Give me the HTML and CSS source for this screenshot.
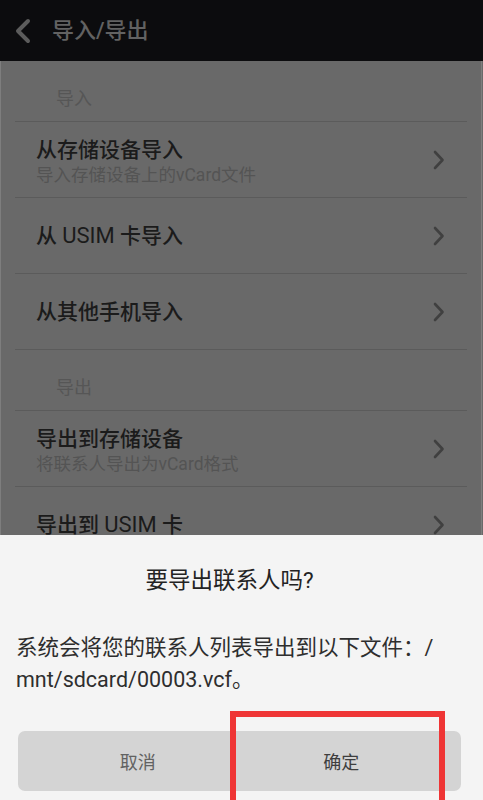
FILE: index.html
```html
<!DOCTYPE html>
<html lang="zh-CN">
<head>
<meta charset="utf-8">
<title>导入/导出</title>
<link rel="stylesheet" href="styles.css">
</head>
<body>
<div class="screen">
  <header class="appbar">
    <svg class="back" width="18" height="26" viewBox="0 0 18 26"><path d="M14 3 L4 13 L14 23" fill="none" stroke="#5c5c5c" stroke-width="4" stroke-linecap="round" stroke-linejoin="round"/></svg>
    <span class="appbar-title">导入/导出</span>
  </header>
  <main class="list">
    <div class="section-head">导入</div>
    <div class="row two">
      <div class="row-text">
        <div class="row-title">从存储设备导入</div>
        <div class="row-sub">导入存储设备上的vCard文件</div>
      </div>
      <svg class="chev" width="12" height="20" viewBox="0 0 12 20"><path d="M2 2 L9.5 10 L2 18" fill="none" stroke="#404040" stroke-width="2.6" stroke-linecap="round" stroke-linejoin="round"/></svg>
    </div>
    <div class="row">
      <div class="row-text"><div class="row-title">从 <span class="latin">USIM</span> 卡导入</div></div>
      <svg class="chev" width="12" height="20" viewBox="0 0 12 20"><path d="M2 2 L9.5 10 L2 18" fill="none" stroke="#404040" stroke-width="2.6" stroke-linecap="round" stroke-linejoin="round"/></svg>
    </div>
    <div class="row">
      <div class="row-text"><div class="row-title">从其他手机导入</div></div>
      <svg class="chev" width="12" height="20" viewBox="0 0 12 20"><path d="M2 2 L9.5 10 L2 18" fill="none" stroke="#404040" stroke-width="2.6" stroke-linecap="round" stroke-linejoin="round"/></svg>
    </div>
    <div class="section-head">导出</div>
    <div class="row two">
      <div class="row-text">
        <div class="row-title">导出到存储设备</div>
        <div class="row-sub">将联系人导出为vCard格式</div>
      </div>
      <svg class="chev" width="12" height="20" viewBox="0 0 12 20"><path d="M2 2 L9.5 10 L2 18" fill="none" stroke="#404040" stroke-width="2.6" stroke-linecap="round" stroke-linejoin="round"/></svg>
    </div>
    <div class="row">
      <div class="row-text"><div class="row-title">导出到 <span class="latin">USIM</span> 卡</div></div>
      <svg class="chev" width="12" height="20" viewBox="0 0 12 20"><path d="M2 2 L9.5 10 L2 18" fill="none" stroke="#404040" stroke-width="2.6" stroke-linecap="round" stroke-linejoin="round"/></svg>
    </div>
  </main>

  <section class="dialog">
    <h2 class="dialog-title">要导出联系人吗?</h2>
    <p class="dialog-body">系统会将您的联系人列表导出到以下文件：/<br>mnt/sdcard/00003.vcf。</p>
    <div class="buttons">
      <button class="btn btn-cancel">取消</button>
      <button class="btn btn-ok">确定</button>
    </div>
  </section>

  <div class="highlight"></div>
</div>
</body>
</html>
```

FILE: styles.css
```css
html, body {
  margin: 0;
  padding: 0;
}
body {
  font-family: Roboto, "Noto Sans CJK SC", "Noto Sans", sans-serif;
  background: #f4f4f4;
}
.screen {
  position: relative;
  width: 483px;
  height: 800px;
  overflow: hidden;
  background: #696969;
}
.appbar {
  height: 61px;
  background: #0c0c0e;
  display: flex;
  align-items: center;
  padding-left: 14px;
  box-sizing: border-box;
}
.back {
  display: block;
  margin-top: 1px;
}
.appbar-title {
  margin-left: 20px;
  font-size: 22px;
  line-height: 30px;
  color: #626262;
  font-weight: 500;
}
.list {
  border-left: 1px solid #7e7e7e;
  border-right: 1px solid #7e7e7e;
  height: 739px;
  box-sizing: border-box;
  margin-right: 1px;
}
.section-head {
  height: 61px;
  margin: 0 14px;
  box-sizing: border-box;
  border-bottom: 1px solid #5b5b5b;
  padding-left: 41px;
  padding-bottom: 9px;
  display: flex;
  align-items: flex-end;
  font-size: 18px;
  line-height: 26px;
  color: #565656;
}
.row {
  height: 76px;
  margin: 0 14px;
  box-sizing: border-box;
  border-bottom: 1px solid #5b5b5b;
  padding-left: 21px;
  padding-right: 22px;
  display: flex;
  align-items: center;
}
.row-text {
  flex: 1;
}
.row-title {
  font-size: 21px;
  line-height: 26px;
  color: #1b1b1b;
  font-weight: 500;
}
.latin {
  font-weight: 400;
  font-size: 22px;
}
.row.two .row-text {
  padding-top: 4px;
}
.row-sub {
  font-size: 17.5px;
  line-height: 24px;
  color: #545454;
}
.chev {
  display: block;
}
.dialog {
  position: absolute;
  left: 0;
  right: 0;
  top: 535px;
  bottom: 0;
  background: #f4f4f4;
  display: flex;
  flex-direction: column;
}
.dialog-title {
  margin: 31px 24px 0 0;
  font-size: 22.5px;
  line-height: 28px;
  font-weight: 400;
  color: #232323;
  text-align: center;
}
.dialog-body {
  margin: 38px 0 0;
  padding: 0 16px;
  font-size: 21.5px;
  line-height: 32px;
  color: #2e2e2e;
}
.buttons {
  margin: 35px 22px 0 18px;
  height: 60px;
  display: flex;
  background: #d4d4d4;
  border-radius: 7px;
  overflow: hidden;
}
.btn {
  flex: 1;
  border: none;
  background: transparent;
  font-family: inherit;
  font-size: 18px;
  padding: 0;
}
.btn-cancel {
  color: #626262;
  padding-left: 18px;
}
.btn-ok {
  color: #3e3e3e;
  padding-right: 18px;
}
.highlight {
  position: absolute;
  left: 230px;
  top: 711px;
  width: 215px;
  height: 110px;
  box-sizing: border-box;
  border: 6px solid #ef3535;
}
```
